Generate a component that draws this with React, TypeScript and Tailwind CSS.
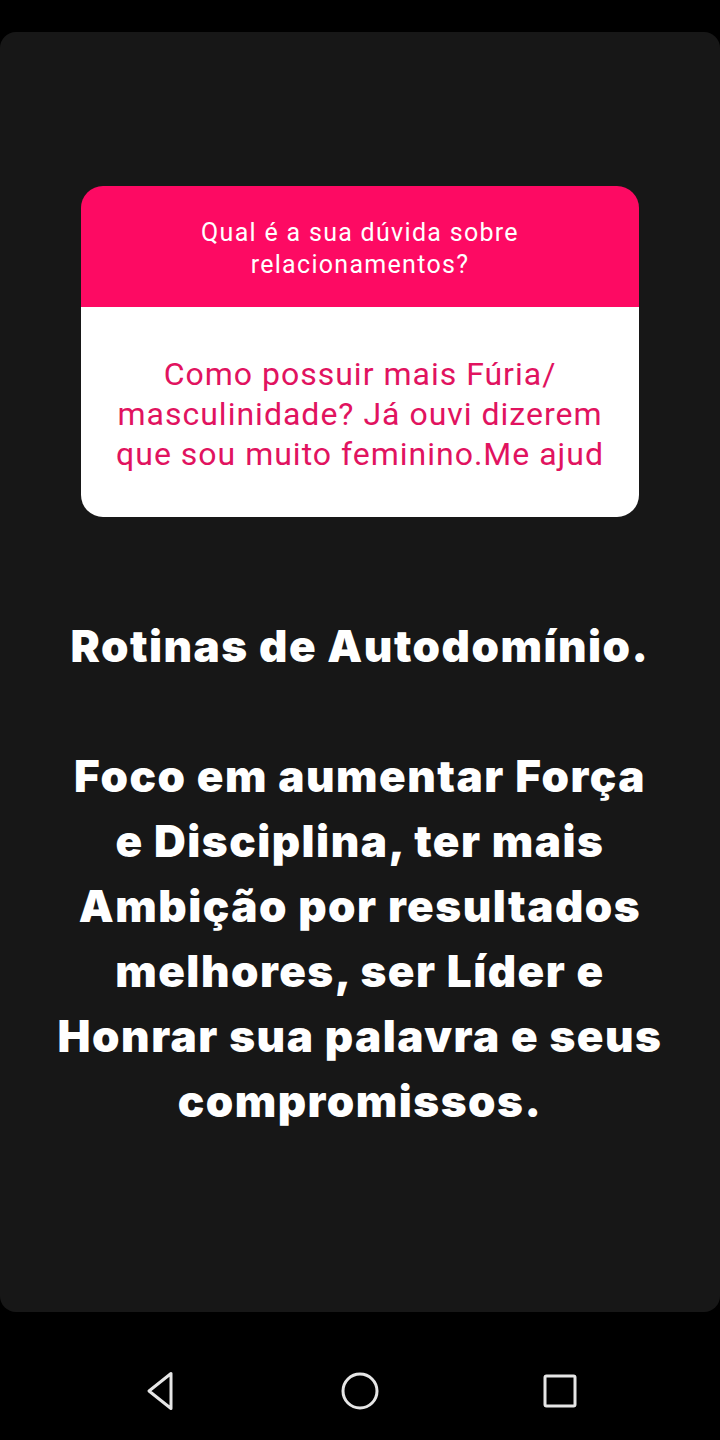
import React from "react";

export default function App() {
  return (
    <div className="w-[720px] h-[1440px] bg-black flex flex-col" style={{ fontFamily: "Roboto, 'Noto Sans', sans-serif" }}>
      <div className="h-[32px] shrink-0" />
      <div className="h-[1280px] shrink-0 bg-[#171717] rounded-[16px] flex flex-col items-center">
        <div className="mt-[154px] w-[558px] rounded-[22px] overflow-hidden flex flex-col">
          <div className="h-[121px] bg-[#fd0a63] flex items-center justify-center text-center">
            <p className="text-white text-[25px] leading-[32px] w-[400px] font-normal tracking-[1.3px] mt-[4px]">
              Qual é a sua dúvida sobre relacionamentos?
            </p>
          </div>
          <div className="h-[210px] bg-white flex items-center justify-center text-center">
            <p className="text-[#e1135f] text-[32px] leading-[40px] w-[520px] tracking-[1px] mt-[4px]">
              Como possuir mais Fúria/ masculinidade? Já ouvi dizerem que sou muito feminino.Me ajud
            </p>
          </div>
        </div>
        <div className="mt-[97px] text-white font-black text-[44px] leading-[65px] tracking-[1.5px] text-center" style={{ fontFamily: "Inter, Roboto, sans-serif" }}>
          <p>Rotinas de Autodomínio.</p>
          <p>&nbsp;</p>
          <p>Foco em aumentar Força</p>
          <p>e Disciplina, ter mais</p>
          <p>Ambição por resultados</p>
          <p>melhores, ser Líder e</p>
          <p>Honrar sua palavra e seus</p>
          <p>compromissos.</p>
        </div>
      </div>
      <div className="flex-1 flex justify-center items-start pt-[59px] gap-[160px]">
        <svg width="40" height="40" viewBox="0 0 40 40">
          <path d="M35 2.5 L35 37.5 L13 20 Z" fill="none" stroke="#e6e6e6" strokeWidth="3" strokeLinejoin="round" transform="translate(-4,0)" />
        </svg>
        <svg width="40" height="40" viewBox="0 0 40 40">
          <circle cx="20" cy="20" r="17" fill="none" stroke="#e6e6e6" strokeWidth="3" />
        </svg>
        <svg width="40" height="40" viewBox="0 0 40 40">
          <rect x="5" y="5" width="30" height="30" rx="1.5" fill="none" stroke="#e6e6e6" strokeWidth="3" />
        </svg>
      </div>
    </div>
  );
}
